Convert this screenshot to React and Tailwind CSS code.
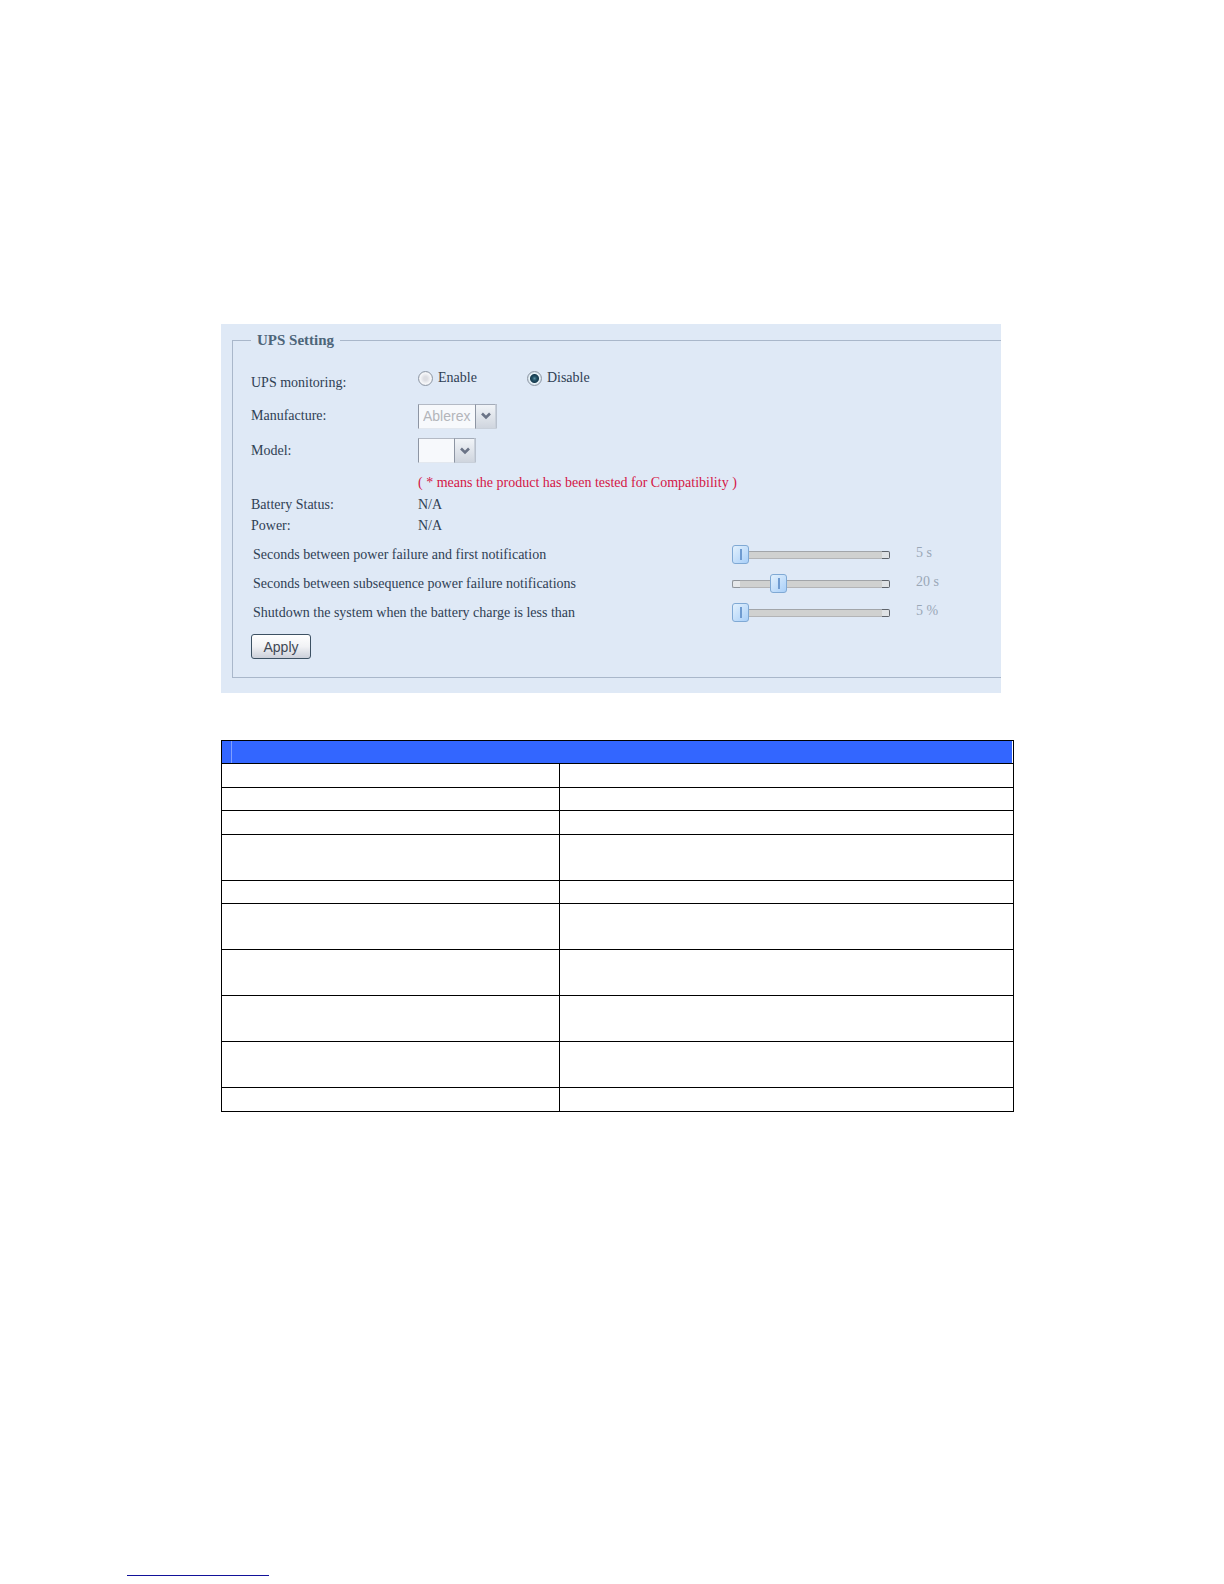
import { useState } from 'react';

const SLIDERS = [
  { id: 'first', label: 'Seconds between power failure and first notification', value: 5, min: 5, max: 60, unit: 's' },
  { id: 'next', label: 'Seconds between subsequence power failure notifications', value: 20, min: 5, max: 60, unit: 's' },
  { id: 'charge', label: 'Shutdown the system when the battery charge is less than', value: 5, min: 5, max: 90, unit: '%' },
];

const TABLE_ROWS = ['h-6', 'h-[23px]', 'h-6', 'h-[46px]', 'h-[23px]', 'h-[46px]', 'h-[46px]', 'h-[46px]', 'h-[46px]', 'h-6'];

const Row = ({ label, htmlFor, className, children }) => (
  <div className={`grid grid-cols-[167px_1fr] items-center ${className}`}>
    {htmlFor ? <label htmlFor={htmlFor}>{label}</label> : <span>{label}</span>}
    {children}
  </div>
);

const Radio = ({ label, checked, onChange }) => (
  <label className="flex items-center gap-[5px]">
    <input
      type="radio"
      name="monitoring"
      checked={checked}
      onChange={onChange}
      className="h-[15px] w-[15px] appearance-none rounded-full border border-[#8f98a5] bg-[radial-gradient(circle,#dcdde2_20%,#f6f7f9_60%,#c5cad3_100%)] checked:bg-[radial-gradient(circle_at_50%_50%,#5f93a6_0px,#255468_2px,#173c50_4px,#e9f3f8_5px,#cbd8e2_7px)]"
    />
    {label}
  </label>
);

const Dropdown = ({ id, className, children }) => (
  <div className={`grid h-[25px] ${className}`}>
    <select
      id={id}
      disabled
      className="col-start-1 row-start-1 w-full appearance-none border border-t-[#b4bac5] border-r-[#b9c1cd] border-b-[#e3e8ef] border-l-[#8d95a3] bg-[#f7f9fc] pl-1 font-['Liberation_Sans',sans-serif] text-[14px] leading-5 text-[#b3b5ba] opacity-100"
    >
      {children}
    </select>
    <span className="pointer-events-none col-start-1 row-start-1 mr-px flex w-[21px] items-center justify-center justify-self-end border border-t-[#a3abb8] border-r-[#c9d0da] border-b-[#c9d0da] border-l-[#8d95a3] bg-linear-to-b from-[#f1f4f8] to-[#cfd5de]">
      <svg viewBox="0 0 10 8" className="h-2 w-[10px]" fill="none" stroke="#6a7386" strokeWidth="2.6">
        <path d="M1 1.5 5 5.5 9 1.5" />
      </svg>
    </span>
  </div>
);

const SliderRow = ({ id, label, value, min, max, unit }) => (
  <div className="grid h-[29px] grid-cols-[479px_158px_1fr] items-center pl-0.5">
    <label htmlFor={id}>{label}</label>
    <div className="grid items-center">
      <div className="col-start-1 row-start-1 flex h-2">
        <span className="w-2 rounded-l-xs border border-r-0 border-[#8f949a] bg-[#e6e8ea]" />
        <span className="flex-1 border-y border-t-[#a2a5a9] border-b-[#b3b4b6] bg-[#d0d1d0]" />
        <span className="w-2 rounded-r-xs border border-l-0 border-[#5f646b] bg-[#dfe2e5]" />
      </div>
      <input
        id={id}
        type="range"
        min={min}
        max={max}
        defaultValue={value}
        disabled
        className="col-start-1 row-start-1 h-[19px] w-full appearance-none bg-transparent [&::-webkit-slider-thumb]:h-[19px] [&::-webkit-slider-thumb]:w-[17px] [&::-webkit-slider-thumb]:appearance-none [&::-webkit-slider-thumb]:rounded-[3px] [&::-webkit-slider-thumb]:border [&::-webkit-slider-thumb]:border-[#80a9d4] [&::-webkit-slider-thumb]:bg-[linear-gradient(#6f9bd0,#6f9bd0),linear-gradient(135deg,#e3f1fd,#a9cff8)] [&::-webkit-slider-thumb]:bg-[length:2px_11px,100%_100%] [&::-webkit-slider-thumb]:bg-center [&::-webkit-slider-thumb]:bg-no-repeat"
      />
    </div>
    <output htmlFor={id} className="pb-1 pl-[26px] text-[#9aa7b6]">
      {value} {unit}
    </output>
  </div>
);

const App = () => {
  const [monitoring, setMonitoring] = useState('disable');

  return (
    <main className="min-h-screen bg-white pt-[324px] font-['Liberation_Serif',serif] text-[14px] leading-5 text-[#2f4054]">
      <div className="mr-[210px] ml-[221px]">
        <form className="mr-[13px] bg-[#dfe9f6] pt-[6px] pb-[15px] pl-[11px]" onSubmit={(e) => e.preventDefault()}>
          <fieldset className="border border-r-0 border-[#a9b7ca] pb-[18px] pl-[18px]">
            <legend className="px-[6px] text-[15px] leading-5 font-bold text-[#4d6579]">UPS Setting</legend>

            <Row label="UPS monitoring:" className="mt-[17px] h-8">
              <div className="flex gap-[50px] pb-[10px]">
                <Radio label="Enable" checked={monitoring === 'enable'} onChange={() => setMonitoring('enable')} />
                <Radio label="Disable" checked={monitoring === 'disable'} onChange={() => setMonitoring('disable')} />
              </div>
            </Row>
            <Row label="Manufacture:" htmlFor="manufacture" className="h-[34px]">
              <Dropdown id="manufacture" className="w-[79px]">
                <option>Ablerex</option>
              </Dropdown>
            </Row>
            <Row label="Model:" htmlFor="model" className="h-[35px]">
              <Dropdown id="model" className="w-[58px]">
                <option></option>
              </Dropdown>
            </Row>
            <p className="mt-[5px] ml-[167px] h-[21px] text-[#d41646]">
              ( * means the product has been tested for Compatibility )
            </p>
            <Row label="Battery Status:" className="h-[21px]">
              <span>N/A</span>
            </Row>
            <Row label="Power:" className="mb-1 h-[21px]">
              <span>N/A</span>
            </Row>

            {SLIDERS.map((slider) => (
              <SliderRow key={slider.id} {...slider} />
            ))}

            <button
              type="submit"
              className="mt-[7px] block h-[25px] w-[60px] rounded-[3px] border border-[#3d5163] bg-linear-to-b from-white via-[#f1f2f5] to-[#ccd0da] font-['Liberation_Sans',sans-serif] text-[14px] text-[#404854]"
            >
              Apply
            </button>
          </fieldset>
        </form>

        <table className="mt-[47px] w-full table-fixed border-collapse border border-black">
          <colgroup>
            <col className="w-[338px]" />
            <col />
          </colgroup>
          <thead>
            <tr className="h-[23px]">
              <th colSpan={2} className="border border-black p-0">
                <div className="mr-px h-[22px] bg-[#3366ff] pl-[9px]">
                  <div className="h-full border-l border-[#7f9fff]" />
                </div>
              </th>
            </tr>
          </thead>
          <tbody>
            {TABLE_ROWS.map((height, i) => (
              <tr key={i} className={height}>
                <td className="border border-black p-0" />
                <td className="border border-black p-0" />
              </tr>
            ))}
          </tbody>
        </table>
      </div>

      <a href="#top" aria-label="Back to top" className="mt-[443px] ml-[127px] block h-[21px] w-[142px] border-b border-[#12129a]" />
    </main>
  );
};

export default App;
